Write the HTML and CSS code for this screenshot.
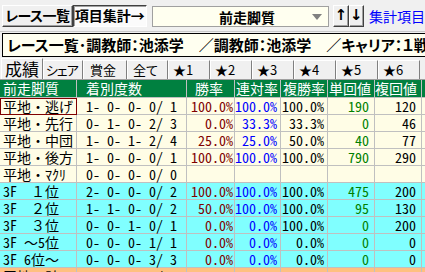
FILE: index.html
```html
<!DOCTYPE html>
<html lang="ja">
<head>
<meta charset="utf-8">
<link rel="stylesheet" href="styles.css">
</head>
<body>
<div class="top">
  <div class="btn b1">レース一覧</div>
  <div class="btn b2">項目集計→</div>
  <div class="combo"><span class="combo-text">前走脚質</span><span class="arrow"></span></div>
  <div class="btn arrowbtn first">↑</div>
  <div class="btn arrowbtn">↓</div>
  <span class="link">集計項目</span>
</div>
<div class="title"><div class="title-box">レース一覧･調教師：池添学　／調教師：池添学　／キャリア：１戦</div></div>
<div class="tabs">
  <div class="tab active t1">成績</div>
  <div class="tab t2">シェア</div>
  <div class="tab t3">賞金</div>
  <div class="tab t4">全て</div>
  <div class="tab star">★1</div>
  <div class="tab star">★2</div>
  <div class="tab star">★3</div>
  <div class="tab star">★4</div>
  <div class="tab star">★5</div>
  <div class="tab star">★6</div>
</div>
<table class="grid">
  <colgroup>
    <col class="c1"><col class="c2"><col class="c3"><col class="c4"><col class="c5"><col class="c6"><col class="c7"><col class="c8">
  </colgroup>
  <thead>
    <tr><th class="h1">前走脚質</th><th class="h2">着別度数</th><th class="h3">勝率</th><th class="h4">連対率</th><th class="h5">複勝率</th><th class="h6">単回値</th><th class="h7">複回値</th><th></th></tr>
  </thead>
  <tbody>
    <tr class="flat"><td class="name sel">平地・逃げ</td><td class="cnt">1- 0- 0- 0/ 1</td><td class="win">100.0%</td><td class="ren">100.0%</td><td class="fuku">100.0%</td><td class="tan">190</td><td class="fk">120</td><td></td></tr>
    <tr class="flat"><td class="name">平地・先行</td><td class="cnt">0- 1- 0- 2/ 3</td><td class="win">0.0%</td><td class="ren">33.3%</td><td class="fuku">33.3%</td><td class="tan">0</td><td class="fk">46</td><td></td></tr>
    <tr class="flat"><td class="name">平地・中団</td><td class="cnt">1- 0- 1- 2/ 4</td><td class="win">25.0%</td><td class="ren">25.0%</td><td class="fuku">50.0%</td><td class="tan">40</td><td class="fk">77</td><td></td></tr>
    <tr class="flat"><td class="name">平地・後方</td><td class="cnt">1- 0- 0- 0/ 1</td><td class="win">100.0%</td><td class="ren">100.0%</td><td class="fuku">100.0%</td><td class="tan">790</td><td class="fk">290</td><td></td></tr>
    <tr class="flat"><td class="name">平地・<span class="kana">ﾏｸﾘ</span></td><td class="cnt">0- 0- 0- 0/ 0</td><td class="win"></td><td class="ren"></td><td class="fuku"></td><td class="tan"></td><td class="fk"></td><td></td></tr>
    <tr class="f3"><td class="name"><span class="hw">3F</span>　１位</td><td class="cnt">2- 0- 0- 0/ 2</td><td class="win">100.0%</td><td class="ren">100.0%</td><td class="fuku">100.0%</td><td class="tan">475</td><td class="fk">200</td><td></td></tr>
    <tr class="f3"><td class="name"><span class="hw">3F</span>　２位</td><td class="cnt">1- 1- 0- 0/ 2</td><td class="win">50.0%</td><td class="ren">100.0%</td><td class="fuku">100.0%</td><td class="tan">95</td><td class="fk">130</td><td></td></tr>
    <tr class="f3"><td class="name"><span class="hw">3F</span>　３位</td><td class="cnt">0- 0- 1- 0/ 1</td><td class="win">0.0%</td><td class="ren">0.0%</td><td class="fuku">100.0%</td><td class="tan">0</td><td class="fk">200</td><td></td></tr>
    <tr class="f3"><td class="name"><span class="hw">3F </span>～<span class="hw">5</span>位</td><td class="cnt">0- 0- 0- 1/ 1</td><td class="win">0.0%</td><td class="ren">0.0%</td><td class="fuku">0.0%</td><td class="tan">0</td><td class="fk">0</td><td></td></tr>
    <tr class="f3"><td class="name"><span class="hw">3F 6</span>位～</td><td class="cnt">0- 0- 0- 3/ 3</td><td class="win">0.0%</td><td class="ren">0.0%</td><td class="fuku">0.0%</td><td class="tan">0</td><td class="fk">0</td><td></td></tr>
    <tr class="tot"><td class="name">平地・計</td><td class="cnt">3- 1- 1- 4/ 9</td><td class="win">33.3%</td><td class="ren">44.4%</td><td class="fuku">55.6%</td><td class="tan">126</td><td class="fk">95</td><td></td></tr>
  </tbody>
</table>
</body>
</html>
```
FILE: styles.css
```css
html, body {
  margin: 0;
  padding: 0;
}
body {
  width: 425px;
  height: 272px;
  overflow: hidden;
  background: #f0f0f0;
  font-family: "Noto Sans CJK JP", "Noto Sans", sans-serif;
  font-size: 14px;
  color: #000;
}
.top {
  display: flex;
  align-items: flex-start;
  height: 31px;
  padding: 5px 0 0 2px;
  box-sizing: border-box;
  white-space: nowrap;
}
.btn {
  height: 22px;
  box-sizing: border-box;
  border: 1px solid;
  border-color: #ffffff #404040 #404040 #ffffff;
  box-shadow: inset -1px -1px #a0a0a0;
  background: #f0f0f0;
  font-weight: bold;
  font-size: 14px;
  line-height: 19px;
  text-align: center;
  font-feature-settings: "palt";
  overflow: hidden;
}
.b1 { width: 74px; letter-spacing: -0.6px; }
.b2 {
  width: 78px;
  background: #fbfbfb;
  border-color: #404040 #ffffff #ffffff #404040;
  box-shadow: inset 1px 1px #a0a0a0;
}
.combo {
  margin-left: 5px;
  margin-top: 1px;
  width: 186px;
  height: 21px;
  box-sizing: border-box;
  border: 1px solid #a0a0a0;
  background: #fffff0;
  display: flex;
  align-items: center;
}
.combo-text {
  margin-left: 66px;
  font-weight: bold;
  font-size: 14px;
  line-height: 18px;
}
.arrow {
  margin-left: auto;
  margin-right: 6px;
  width: 0;
  height: 0;
  border-left: 5px solid transparent;
  border-right: 5px solid transparent;
  border-top: 6px solid #808080;
}
.arrowbtn {
  width: 16px;
  font-size: 15px;
  font-family: "DejaVu Sans", sans-serif;
}
.arrowbtn.first { margin-left: 4px; }
.link {
  margin-left: 5px;
  color: #0000ff;
  line-height: 22px;
  font-size: 14px;
}
.title {
  height: 27px;
  box-sizing: border-box;
  padding: 1px 0 0 2px;
  border-top: 1px solid #c8c8c8;
}
.title-box {
  height: 24px;
  box-sizing: border-box;
  border: 1px solid #000;
  border-right: none;
  background: #fffff0;
  font-weight: bold;
  font-size: 15px;
  line-height: 21px;
  padding-left: 4px;
  white-space: nowrap;
  overflow: hidden;
  font-feature-settings: "palt";
}
.tabs {
  display: flex;
  height: 22px;
  box-sizing: border-box;
  padding-left: 1px;
  border-bottom: 1px solid #a0a0a0;
}
.tab {
  width: 42px;
  box-sizing: border-box;
  border: 1px solid #fff;
  border-right-color: #808080;
  border-bottom: none;
  margin-top: 2px;
  padding-left: 3px;
  font-size: 13px;
  line-height: 18px;
  white-space: nowrap;
  font-feature-settings: "palt";
}
.tab.active {
  margin-top: 0;
  width: 42px;
  font-size: 17px;
  line-height: 20px;
  padding-left: 3px;
}
.t2 { width: 40px; letter-spacing: -1px; padding-left: 2px; }
.t3 { width: 44px; padding-left: 6px; }
.t4 { width: 41px; padding-left: 5px; }
.tab.star { padding-left: 4px; }
.grid {
  border-collapse: separate;
  border-spacing: 0;
  table-layout: fixed;
  width: 430px;
  font-size: 14px;
}
.c1 { width: 77px; }
.c2 { width: 110px; }
.c3 { width: 48px; }
.c4 { width: 46px; }
.c5 { width: 47px; }
.c6 { width: 47px; }
.c7 { width: 47px; }
.c8 { width: 8px; }
.grid th {
  background: #008040;
  color: #fff;
  font-weight: normal;
  text-align: left;
  line-height: 17px;
  padding: 0;
  border-right: 1px solid #c0c0c0;
  border-bottom: 1px solid #c0c0c0;
  white-space: nowrap;
  overflow: hidden;
}
.grid th.h1 { padding-left: 3px; }
.grid th.h2 { padding-left: 9px; }
.grid th.h3 { padding-left: 8px; }
.grid th.h4 { padding-left: 1px; }
.grid th.h5 { padding-left: 2px; }
.grid th.h6 { padding-left: 1px; }
.grid th.h7 { padding-left: 0; }
.grid td {
  line-height: 16px;
  padding: 0;
  border-right: 1px solid #c0c0c0;
  border-bottom: 1px solid #c0c0c0;
  white-space: pre;
  font-feature-settings: "hwid";
}
.flat td { background: #fffde6; }
.f3 td { background: #80ffff; }
.tot td { background: #ffc080; }
.grid td.name {
  padding-left: 3px;
  font-feature-settings: normal;
}
.hw { font-feature-settings: "hwid"; }
.kana { font-size: 14px; }
.grid td.sel {
  outline: 1px solid #800000;
  outline-offset: -1px;
}
.grid td.cnt { padding-left: 9px; }
.win { color: #800000; text-align: right; padding-right: 1px !important; }
.ren { color: #0000ff; text-align: right; padding-right: 3px !important; }
.fuku { color: #000; text-align: right; padding-right: 3px !important; }
.tan { color: #008000; text-align: right; padding-right: 5px !important; }
.fk { color: #000; text-align: right; padding-right: 5px !important; }
```
